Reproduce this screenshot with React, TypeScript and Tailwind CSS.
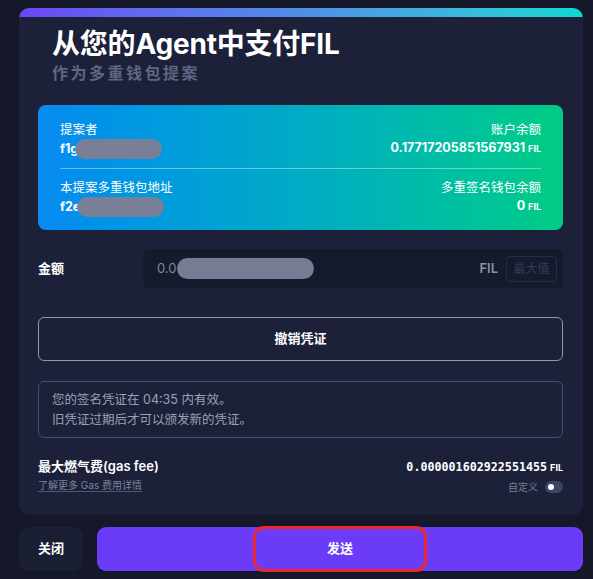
import React from 'react';

const Blur: React.FC<{ w: string }> = ({ w }) => (
  <span className={`inline-block h-[20px] ${w} rounded-full bg-[#7a7f98] align-middle`} />
);

const App: React.FC = () => {
  return (
    <div className="w-[593px] h-[579px] overflow-hidden bg-[#141829] pt-[8px] pl-[19px] pr-[10px] font-['Inter','Noto_Sans_CJK_SC',sans-serif] text-white">
      <div className="rounded-[10px] bg-[#1c2139] overflow-hidden">
        <div className="h-[9px] bg-gradient-to-r from-[#6a45f6] via-[#4f8ee6] to-[#0bd8d2]" />
        <div className="pl-[19px] pr-[20px] pb-[22px]">
          <div className="pl-[14px] pt-[12px]">
            <h1 className="text-[28px] leading-[30px] font-bold tracking-[-0.2px]">从您的Agent中支付FIL</h1>
            <p className="mt-[3px] text-[16px] leading-[22px] font-semibold tracking-[2.5px] text-[#5f6683]">作为多重钱包提案</p>
          </div>

          {/* account info */}
          <div className="mt-[21px] h-[125px] rounded-[8px] bg-gradient-to-r from-[#0a8af2] via-[#02abc4] to-[#04cc84] px-[22px] pt-[16px]">
            <div className="flex justify-between">
              <div>
                <div className="text-[12.5px] leading-[18px]">提案者</div>
                <div className="text-[12.5px] leading-[18px] font-bold flex items-center">f1g<span className="-ml-[3px]"><Blur w="w-[87px]" /></span></div>
              </div>
              <div className="text-right">
                <div className="text-[12.5px] leading-[18px]">账户余额</div>
                <div className="text-[12.5px] leading-[18px] font-bold">0.17717205851567931 <span className="text-[9px]">FIL</span></div>
              </div>
            </div>
            <div className="mt-[9px] mb-[10px] h-px bg-white/40" />
            <div className="flex justify-between">
              <div>
                <div className="text-[12.5px] leading-[18px]">本提案多重钱包地址</div>
                <div className="text-[12.5px] leading-[18px] font-bold flex items-center">f2e<span className="-ml-[3px]"><Blur w="w-[87px]" /></span></div>
              </div>
              <div className="text-right">
                <div className="text-[12.5px] leading-[18px]">多重签名钱包余额</div>
                <div className="text-[12.5px] leading-[18px] font-bold">0 <span className="text-[9px]">FIL</span></div>
              </div>
            </div>
          </div>

          {/* amount */}
          <div className="mt-[19px] flex items-center">
            <div className="w-[105px] text-[13px] font-semibold">金额</div>
            <div className="flex-1 h-[39px] rounded-[6px] bg-[#151a2d] flex items-center pl-[14px] pr-[6px]">
              <span className="text-[13px] text-[#7f859d]">0.0</span>
              <span className="h-[21px] w-[137px] rounded-full bg-[#777c95]" />
              <span className="ml-auto text-[13px] font-semibold text-[#8c91a7]">FIL</span>
              <span className="ml-[8px] h-[26px] w-[51px] rounded-[4px] border border-[#272d47] text-[12px] text-[#363c58] flex items-center justify-center">最大值</span>
            </div>
          </div>

          <button className="mt-[29px] w-full h-[44px] rounded-[6px] border border-[#9297ad] text-[13px] font-bold">撤销凭证</button>

          <div className="mt-[20px] h-[57px] rounded-[6px] border border-[#474e6b] px-[13px] pt-[8px] text-[12.5px] leading-[20px] text-[#9ba0b7]">
            <p>您的签名凭证在 04:35 内有效。</p>
            <p>旧凭证过期后才可以颁发新的凭证。</p>
          </div>

          {/* gas fee */}
          <div className="mt-[19px] flex justify-between">
            <div>
              <div className="text-[13px] leading-[18px] font-semibold">最大燃气费(gas fee)</div>
              <a className="mt-[4px] block w-fit text-[10px] leading-[12px] text-[#7d839c] border-b border-[#4f5774]">了解更多 Gas 费用详情</a>
            </div>
            <div className="text-right">
              <div className="text-[13px] leading-[18px] font-semibold">
                <span className="font-['DejaVu_Sans_Mono',monospace] text-[11.7px]">0.000001602922551455</span>
                <span className="ml-[3px] text-[9px] font-bold">FIL</span>
              </div>
              <div className="mt-[4px] h-[12px] flex items-center justify-end gap-[7px]">
                <span className="text-[10px] text-[#7a809a]">自定义</span>
                <span className="w-[18px] h-[12px] rounded-full bg-[#3c4363] flex items-center pl-[3px]">
                  <span className="w-[6px] h-[6px] rounded-full bg-white" />
                </span>
              </div>
            </div>
          </div>
        </div>
      </div>

      {/* footer buttons */}
      <div className="mt-[12px] flex gap-[14px] h-[44px]">
        <button className="w-[64px] rounded-[10px] bg-[#1a1f33] text-[13px] font-bold">关闭</button>
        <button className="relative flex-1 rounded-[9px] bg-[#6a3cf7] text-[13px] font-bold">
          发送
          <span className="absolute left-1/2 -translate-x-1/2 top-[-1px] bottom-[-1px] w-[174px] rounded-[11px] border-[3px] border-[#f0262e]" />
        </button>
      </div>
    </div>
  );
};

export default App;
